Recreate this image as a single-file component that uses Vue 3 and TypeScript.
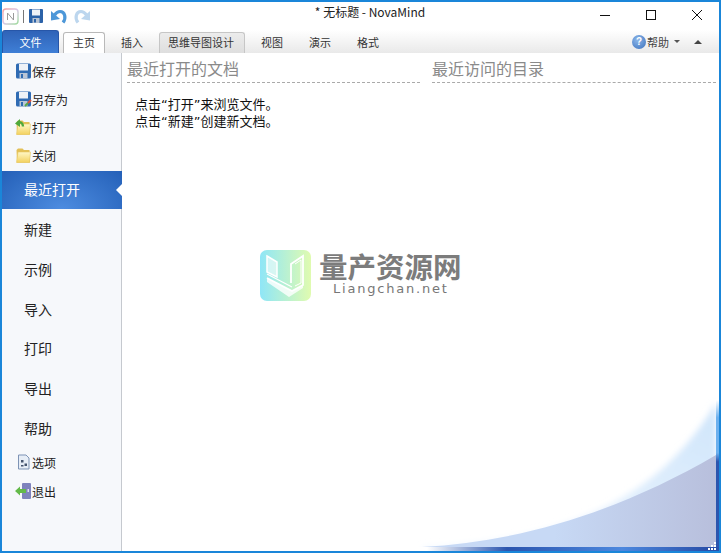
<script setup lang="ts">
const tabs = [
  { label: '主页', kind: 'home' },
  { label: '插入', kind: '' },
  { label: '思维导图设计', kind: 'context' },
  { label: '视图', kind: '' },
  { label: '演示', kind: '' },
  { label: '格式', kind: '' },
];

const topItems = [
  { label: '保存', icon: 'save' },
  { label: '另存为', icon: 'saveas' },
  { label: '打开', icon: 'open' },
  { label: '关闭', icon: 'close' },
];
const navItems = ['新建', '示例', '导入', '打印', '导出', '帮助'];
const bottomItems = [
  { label: '选项', icon: 'options' },
  { label: '退出', icon: 'exit' },
];
const gripDots = [
  [7, 1],
  [4, 4],
  [7, 4],
  [1, 7],
  [4, 7],
  [7, 7],
];
</script>

<template>
  <div class="window">
    <header class="titlebar">
      <div class="quick">
        <svg class="app-icon" width="17" height="17" viewBox="0 0 17 17">
          <defs>
            <linearGradient id="ring" x1="0" y1="0" x2="1" y2="1">
              <stop offset="0" stop-color="#f2a0a0" />
              <stop offset="0.5" stop-color="#d9c8e8" />
              <stop offset="1" stop-color="#9fdc9c" />
            </linearGradient>
          </defs>
          <rect x="1" y="1" width="15" height="15" rx="3" fill="#fff" stroke="url(#ring)" stroke-width="1.4" />
          <path d="M5.5 12V5l6 7V5" fill="none" stroke="#9a9a9a" stroke-width="1" />
        </svg>
        <span class="sep"></span>
        <svg width="16" height="16" viewBox="0 0 16 16">
          <rect x="1" y="1" width="14" height="14" rx="1" fill="#2b62a8" />
          <rect x="4" y="1.500" width="8" height="6" fill="#eef2f7" />
          <rect x="4.500" y="10" width="7" height="5" fill="#b8c4d4" />
          <rect x="6" y="11" width="2" height="3.500" fill="#2b62a8" />
        </svg>
        <svg class="undo" width="18" height="16" viewBox="0 0 18 16">
          <path d="M13 14.500C16.500 10 15 3.500 10 3.500 7.500 3.500 6 5 4.500 7" fill="none" stroke="#4d97d8" stroke-width="3.200" />
          <path d="M1 3v9.500l9-1.500z" fill="#4d97d8" />
        </svg>
        <svg class="redo" width="18" height="16" viewBox="0 0 18 16">
          <path d="M5 14.500C1.500 10 3 3.500 8 3.500c2.500 0 4 1.500 5.500 3.500" fill="none" stroke="#bcd6ee" stroke-width="3.200" />
          <path d="M17 3v9.500L8 11z" fill="#bcd6ee" />
        </svg>
      </div>
      <div class="title">* 无标题 - NovaMind</div>
      <div class="controls">
        <svg width="12" height="12" viewBox="0 0 12 12"><path d="M1 6.500h10" stroke="#111" stroke-width="1" /></svg>
        <svg width="12" height="12" viewBox="0 0 12 12"><rect x="1.500" y="1.500" width="9" height="9" fill="none" stroke="#111" /></svg>
        <svg width="12" height="12" viewBox="0 0 12 12"><path d="M1 1l10 10M11 1L1 11" stroke="#111" stroke-width="1" /></svg>
      </div>
    </header>

    <nav class="ribbon">
      <button class="file-tab">文件</button>
      <div
        v-for="tab in tabs"
        :key="tab.label"
        class="tab"
        :class="tab.kind"
      >
        {{ tab.label }}
      </div>
      <div class="help">
        <span class="help-icon">?</span>
        <span>帮助</span>
        <span class="caret"></span>
        <span class="collapse"></span>
      </div>
    </nav>

    <div class="body">
      <aside class="sidebar">
        <div class="small-group">
          <div v-for="item in topItems" :key="item.label" class="small-item">
            <svg width="18" height="18" viewBox="0 0 18 18">
              <defs>
                <linearGradient id="folder" x1="0" y1="0" x2="0" y2="1">
                  <stop offset="0" stop-color="#fff8c8" />
                  <stop offset="1" stop-color="#f3d15e" />
                </linearGradient>
              </defs>
              <template v-if="item.icon === 'save' || item.icon === 'saveas'">
                <rect x="2" y="1.500" width="15" height="15" rx="1.500" fill="#2f6bb3" />
                <rect x="5" y="2" width="9" height="6.500" fill="#eef2f7" />
                <rect x="5.500" y="11" width="8" height="5.500" fill="#b9c5d6" />
                <rect x="7" y="12" width="2" height="4" fill="#2f6bb3" />
                <template v-if="item.icon === 'saveas'">
                  <path d="M11 16l3-3" stroke="#57a845" stroke-width="2" />
                  <path d="M14 13l3-3" stroke="#d8503a" stroke-width="2" />
                </template>
              </template>
              <template v-else>
                <path d="M3 16.500 2.500 4 4 2.500h4.500L10 4h5.500l.5 12.500z" fill="#e3c056" />
                <path d="M2.500 16.500 4 6h12.500l-1 10.500z" fill="url(#folder)" stroke="#e8c860" stroke-width=".6" />
                <template v-if="item.icon === 'open'">
                  <path d="M9 8.500C9 5 6 3.500 4 4.500" fill="none" stroke="#4fa93b" stroke-width="2.400" />
                  <path d="M1 5.500 6 1v8z" fill="#4fa93b" />
                </template>
              </template>
            </svg>
            <span>{{ item.label }}</span>
          </div>
        </div>

        <div class="nav-item active">
          最近打开
          <span class="active-arrow"></span>
        </div>
        <div v-for="item in navItems" :key="item" class="nav-item">{{ item }}</div>

        <div class="small-group bottom">
          <div v-for="item in bottomItems" :key="item.label" class="small-item">
            <svg width="18" height="18" viewBox="0 0 18 18">
              <template v-if="item.icon === 'options'">
                <path d="M4.500 2H12l3 3v11H4.500z" fill="#e6edf6" stroke="#7d93b5" />
                <rect x="7" y="7" width="2.500" height="2.500" fill="#44546e" />
                <rect x="10.500" y="10.500" width="2.500" height="2.500" fill="#44546e" />
                <rect x="7" y="12" width="2.500" height="1.500" fill="#44546e" />
              </template>
              <template v-else>
                <rect x="8" y="1" width="9" height="16" rx="1" fill="#7f83bd" />
                <rect x="13.500" y="7" width="1.500" height="3" fill="#dfe1f2" />
                <path d="M1 9l5-4.500V7h6v4H6v2.500z" fill="#63ba49" />
              </template>
            </svg>
            <span>{{ item.label }}</span>
          </div>
        </div>
      </aside>

      <main class="content">
        <svg class="swoosh" width="594" height="152" viewBox="0 0 594 152">
          <defs>
            <linearGradient id="glow" x1="0" y1="1" x2="1" y2="0">
              <stop offset="0" stop-color="#f6faff" />
              <stop offset="1" stop-color="#cfe5fb" />
            </linearGradient>
            <linearGradient id="fill" x1="0" y1="0" x2="1" y2="0">
              <stop offset="0.45" stop-color="#c7d9f5" />
              <stop offset="1" stop-color="#b8bfdc" />
            </linearGradient>
            <filter id="soft" x="-10%" y="-20%" width="120%" height="140%">
              <feGaussianBlur stdDeviation="3" />
            </filter>
          </defs>
          <path d="M300 152C430 145 530 115 594 8V160H300z" fill="url(#glow)" filter="url(#soft)" />
          <path d="M300 152C400 147 500 115 594 60V152z" fill="url(#fill)" />
        </svg>
        <span class="edge"></span>

        <div class="columns">
          <section class="column">
            <h2>最近打开的文档</h2>
            <p>点击“打开”来浏览文件。<br />点击“新建”创建新文档。</p>
          </section>
          <section class="column wide">
            <h2>最近访问的目录</h2>
          </section>
        </div>

        <div class="watermark">
          <svg width="51" height="51" viewBox="0 0 51 51">
            <defs>
              <linearGradient id="logo" x1="0" y1="0" x2="1" y2="0">
                <stop offset="0" stop-color="#8fe6f7" />
                <stop offset="1" stop-color="#e0fbb0" />
              </linearGradient>
            </defs>
            <rect width="51" height="51" rx="7" fill="url(#logo)" />
            <path d="M7 6l10 6v15L7 22z" fill="#fff" fill-opacity=".55" stroke="#fff" stroke-width="1.500" />
            <path d="M7 24l25 13" fill="none" stroke="#fff" stroke-width="1.200" />
            <path d="M7 28l25 13 11-6V6L31 14v19" fill="none" stroke="#fff" stroke-width="1.800" />
            <path d="M7 28l25 13 11-6v3l-14 9L7 32z" fill="#fff" fill-opacity=".8" />
            <path d="M35 14l6-4v23l-6 3" fill="none" stroke="#fff" stroke-width="1" />
          </svg>
          <div class="mark-text">
            <div class="mark-cn">量产资源网</div>
            <div class="mark-en">Liangchan.net</div>
          </div>
        </div>
      </main>
    </div>

    <footer class="statusbar">
      <svg class="grip" width="10" height="10" viewBox="0 0 10 10">
        <rect
          v-for="dot in gripDots"
          :key="dot.join('-')"
          :x="dot[0]"
          :y="dot[1]"
          width="2"
          height="2"
          fill="#fff"
        />
      </svg>
    </footer>
  </div>
</template>

<style>
html,
body {
  margin: 0;
  background: #fff;
}
</style>

<style scoped>
.window {
  width: 721px;
  height: 553px;
  box-sizing: border-box;
  display: flex;
  flex-direction: column;
  background: #fff;
  border: 2px solid #1a86d9;
  font-family: "Noto Sans CJK SC", "Liberation Sans", sans-serif;
  color: #222;
  overflow: hidden;
}

.titlebar {
  height: 28px;
  flex: none;
  display: flex;
  align-items: center;
  position: relative;
  background: #fff;
}

.quick {
  display: flex;
  align-items: center;
  gap: 3px;
}

.sep {
  width: 1px;
  height: 13px;
  background: #777;
  margin: 0 1px;
}

.undo {
  margin-left: 3px;
}

.redo {
  margin-left: 2px;
}

.title {
  flex: 1;
  text-align: center;
  font-size: 12px;
  color: #222;
  padding-left: 50px;
  margin-top: -9px;
}

.controls {
  display: flex;
  gap: 34px;
  padding-right: 16px;
  margin-top: -2px;
}

.ribbon {
  height: 23px;
  flex: none;
  display: flex;
  align-items: flex-end;
  background: linear-gradient(#fff, #e9e9e9);
  font-size: 11px;
  box-sizing: border-box;
}

.file-tab {
  width: 57px;
  height: 23px;
  padding: 0;
  border: 1px solid #2756a8;
  border-bottom: 0;
  border-radius: 3px 3px 0 0;
  background: linear-gradient(#2f63b8, #3f7fd6);
  color: #fff;
  font: inherit;
  margin-right: 4px;
}

.tab {
  height: 21px;
  line-height: 19px;
  text-align: center;
  padding: 0 9px;
  margin-right: 6px;
  box-sizing: border-box;
  color: #333;
  border: 1px solid transparent;
  border-bottom: 0;
}

.tab.home {
  background: #fff;
  border-color: #b9b9b9;
  border-radius: 3px 3px 0 0;
}

.tab.context {
  background: linear-gradient(#ececec, #dedede);
  border-color: #c6c6c6;
  border-radius: 3px 3px 0 0;
  padding: 0 10px 0 8px;
}

.help {
  margin-left: auto;
  height: 23px;
  display: flex;
  align-items: center;
  gap: 1px;
  color: #444;
  padding-right: 17px;
}

.help-icon {
  width: 14px;
  height: 14px;
  border-radius: 50%;
  background: radial-gradient(circle at 40% 35%, #8eb8ea, #3a70bd);
  color: #fff;
  font: bold 10px/14px "Liberation Sans", sans-serif;
  text-align: center;
}

.caret {
  width: 0;
  height: 0;
  border: 3px solid transparent;
  border-top: 3px solid #555;
  border-bottom: 0;
  margin-left: 4px;
}

.collapse {
  width: 0;
  height: 0;
  border: 4px solid transparent;
  border-bottom: 4px solid #444;
  border-top: 0;
  margin-left: 13px;
}

.body {
  flex: 1;
  min-height: 0;
  display: flex;
}

.sidebar {
  width: 120px;
  flex: none;
  box-sizing: border-box;
  background: #f6f8fb;
  border-right: 1px solid #c5c9cf;
  font-size: 12px;
}

.small-group {
  padding-top: 4px;
  padding-bottom: 2px;
}

.small-group.bottom {
  padding: 0;
  margin-top: -1px;
}

.small-item {
  height: 28px;
  display: flex;
  align-items: center;
  padding-left: 12px;
  color: #222;
}

.small-group.bottom .small-item {
  height: 29px;
}

.nav-item {
  height: 39.800px;
  line-height: 39.800px;
  padding-left: 22px;
  font-size: 14px;
  color: #222;
  position: relative;
}

.nav-item.active {
  height: 38px;
  line-height: 36px;
  margin-right: -1px;
  margin-bottom: 1px;
  color: #fff;
  background: radial-gradient(ellipse at 50% 100%, #4d8ce0, #2460b8);
}

.active-arrow {
  position: absolute;
  right: 0;
  top: 13px;
  width: 0;
  height: 0;
  border: 6px solid transparent;
  border-right: 6px solid #fff;
  border-left: 0;
}

.content {
  flex: 1;
  min-width: 0;
  position: relative;
  background: #fff;
}

.swoosh {
  position: absolute;
  left: 0;
  bottom: 0;
}

.edge {
  position: absolute;
  right: 0;
  bottom: 0;
  width: 3px;
  height: 147px;
  background: linear-gradient(rgba(108, 176, 238, 0), #6cb0ee 12%, #6cb0ee 36%, #2c55ae 42%, #2c55ae);
}

.columns {
  position: relative;
  display: flex;
  padding: 0 3px 0 5px;
  gap: 12px;
}

.column {
  width: 293px;
  flex: none;
}

.column.wide {
  flex: 1;
  width: auto;
}

.column h2 {
  margin: 0;
  height: 30px;
  line-height: 31px;
  box-sizing: border-box;
  font-size: 16px;
  font-weight: 400;
  color: #8a8a8a;
  border-bottom: 1px dashed #aaa;
}

.column p {
  margin: 13px 0 0 8px;
  font-family: "DejaVu Sans", "Noto Sans CJK SC", sans-serif;
  font-size: 13px;
  line-height: 17px;
  color: #111;
}

.watermark {
  position: absolute;
  left: 138px;
  top: 197px;
  display: flex;
  gap: 8px;
}

.mark-cn {
  font-size: 28.500px;
  line-height: 30px;
  font-weight: 700;
  color: #7c7c7c;
  margin-top: 1px;
}

.mark-en {
  font-family: "DejaVu Sans", sans-serif;
  font-size: 13px;
  letter-spacing: 1.800px;
  line-height: 16px;
  color: #777;
  padding-left: 14px;
}

.statusbar {
  height: 4px;
  flex: none;
  position: relative;
  background: linear-gradient(
    90deg,
    #f6f8fb 119px,
    #c5c9cf 119px,
    #c5c9cf 120px,
    #fff 120px,
    #fff 425px,
    #2c55ae 505px,
    #4d88de 620px,
    #2a50aa 705px
  );
}

.grip {
  position: absolute;
  right: 2px;
  bottom: 0;
}
</style>
